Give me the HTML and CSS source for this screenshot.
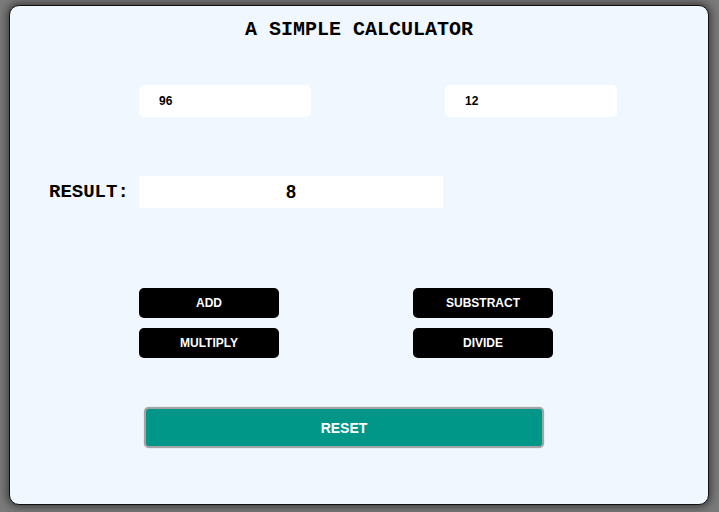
FILE: index.html
```html
<!DOCTYPE html>
<html>
<head>
<meta charset="utf-8">
<link rel="stylesheet" href="styles.css">
</head>
<body>
<div class="card">
  <h1 class="title">A SIMPLE CALCULATOR</h1>
  <div class="inputs">
    <input class="num" type="text" value="96">
    <input class="num" type="text" value="12">
  </div>
  <div class="result-row">
    <label class="result-label">RESULT:</label>
    <div class="result-box">8</div>
  </div>
  <div class="ops">
    <button class="op">ADD</button>
    <button class="op">SUBSTRACT</button>
    <button class="op">MULTIPLY</button>
    <button class="op">DIVIDE</button>
  </div>
  <div class="reset-row">
    <button class="reset">RESET</button>
  </div>
</div>
</body>
</html>
```

FILE: styles.css
```css
html, body {
  margin: 0;
  padding: 0;
}
body {
  width: 719px;
  height: 512px;
  background: #7b7b7b;
  display: flex;
  align-items: flex-start;
  justify-content: flex-start;
  padding: 5px 0 0 9px;
  box-sizing: border-box;
  font-family: "Liberation Sans", Arial, sans-serif;
}
.card {
  width: 700px;
  height: 500px;
  box-sizing: border-box;
  border: 1px solid #111;
  border-radius: 10px;
  background: #f0f7ff;
  box-shadow: 0 0 8px 2px #3a3a3a;
  display: flex;
  flex-direction: column;
}
.title {
  margin: 12px 0 0;
  font-family: "Liberation Mono", "Courier New", monospace;
  font-weight: bold;
  font-size: 20px;
  line-height: 24px;
  text-align: center;
  color: #000;
}
.inputs {
  margin-top: 43px;
  padding-left: 129px;
  display: flex;
  gap: 134px;
}
.num {
  width: 172px;
  height: 32px;
  box-sizing: border-box;
  border: none;
  border-radius: 5px;
  background: #fff;
  padding: 0 0 0 20px;
  font-family: "Liberation Sans", Arial, sans-serif;
  font-weight: bold;
  font-size: 12px;
  color: #000;
  outline: none;
}
.result-row {
  margin-top: 59px;
  padding-left: 39px;
  display: flex;
  align-items: center;
}
.result-label {
  width: 90px;
  font-family: "Liberation Mono", "Courier New", monospace;
  font-weight: bold;
  font-size: 19px;
  color: #000;
}
.result-box {
  width: 304px;
  height: 32px;
  background: #fff;
  display: flex;
  align-items: center;
  justify-content: center;
  font-weight: bold;
  font-size: 18px;
  color: #000;
}
.ops {
  margin-top: 80px;
  padding-left: 129px;
  display: grid;
  grid-template-columns: 140px 140px;
  column-gap: 134px;
  row-gap: 10px;
}
.op {
  height: 30px;
  border: none;
  border-radius: 5px;
  background: #000;
  color: #fff;
  font-family: "Liberation Sans", Arial, sans-serif;
  font-weight: bold;
  font-size: 12px;
  padding: 0;
}
.reset-row {
  margin-top: 49px;
  padding-left: 134px;
  display: flex;
}
.reset {
  width: 400px;
  height: 41px;
  box-sizing: border-box;
  border: 2px solid #a4a4a4;
  border-radius: 5px;
  background: #009688;
  color: #fff;
  font-family: "Liberation Sans", Arial, sans-serif;
  font-weight: bold;
  font-size: 14px;
  box-shadow: 0 0 1px rgba(0,0,0,0.4);
}
```
